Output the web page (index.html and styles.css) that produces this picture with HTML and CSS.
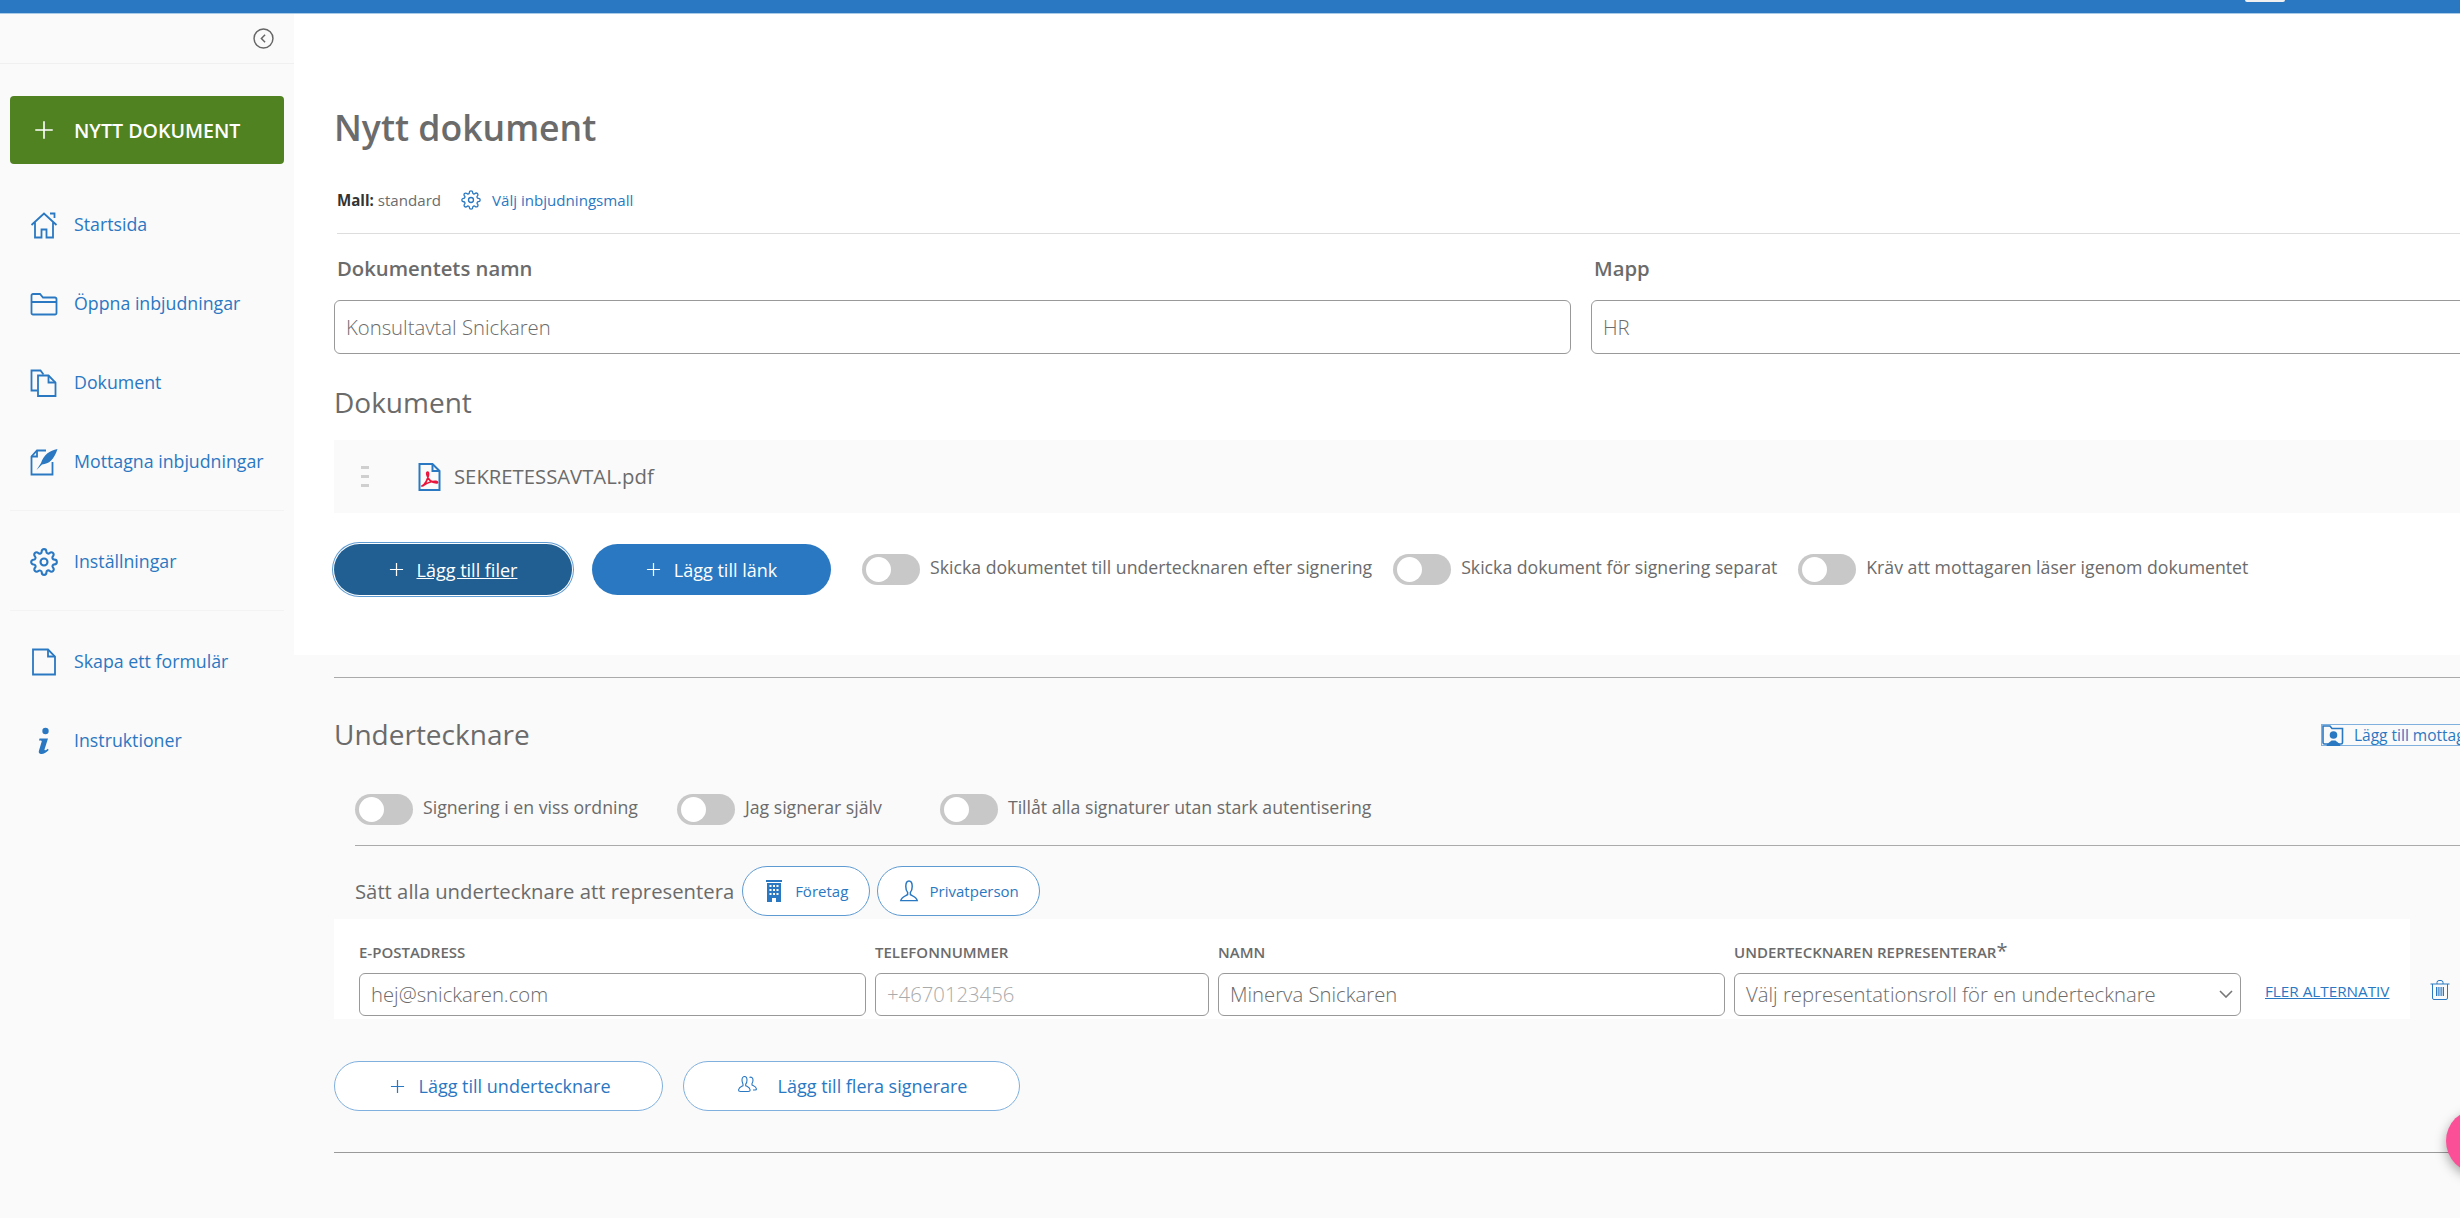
FILE: index.html
```html
<!DOCTYPE html>
<html lang="sv">
<head>
  <meta charset="UTF-8">
  <meta name="viewport" content="width=device-width, initial-scale=1.0">
  <title>Nytt dokument</title>
  <link rel="stylesheet" href="styles.css">
</head>
<body>
  <svg class="sprite" width="0" height="0">
    <symbol id="gear" viewBox="0 0 24 24">
      <circle cx="12" cy="12" r="3"/>
      <path d="M19.4 15a1.65 1.65 0 0 0 .33 1.82l.06.06a2 2 0 0 1 0 2.83 2 2 0 0 1-2.83 0l-.06-.06a1.65 1.65 0 0 0-1.82-.33 1.65 1.65 0 0 0-1 1.51V21a2 2 0 0 1-2 2 2 2 0 0 1-2-2v-.09A1.65 1.65 0 0 0 9 19.4a1.65 1.65 0 0 0-1.82.33l-.06.06a2 2 0 0 1-2.83 0 2 2 0 0 1 0-2.83l.06-.06a1.65 1.65 0 0 0 .33-1.82 1.65 1.65 0 0 0-1.51-1H3a2 2 0 0 1-2-2 2 2 0 0 1 2-2h.09A1.65 1.65 0 0 0 4.6 9a1.65 1.65 0 0 0-.33-1.82l-.06-.06a2 2 0 0 1 0-2.83 2 2 0 0 1 2.83 0l.06.06a1.65 1.65 0 0 0 1.82.33H9a1.65 1.65 0 0 0 1-1.51V3a2 2 0 0 1 2-2 2 2 0 0 1 2 2v.09a1.65 1.65 0 0 0 1 1.51 1.65 1.65 0 0 0 1.82-.33l.06-.06a2 2 0 0 1 2.83 0 2 2 0 0 1 0 2.83l-.06.06a1.65 1.65 0 0 0-.33 1.82V9a1.65 1.65 0 0 0 1.51 1H21a2 2 0 0 1 2 2 2 2 0 0 1-2 2h-.09a1.65 1.65 0 0 0-1.51 1z"/>
    </symbol>
    <symbol id="plus" viewBox="0 0 16 16">
      <path d="M8 1v14M1 8h14"/>
    </symbol>
  </svg>

  <div class="topbar"><span class="topbar-pill"></span></div>

  <div class="app">
    <aside class="sidebar">
      <div class="sidebar-top">
        <svg class="collapse" viewBox="0 0 20 20"><circle cx="10" cy="10" r="9"/><path d="M11.5 6.5 8 10l3.5 3.5"/></svg>
      </div>
      <a class="new-doc"><svg class="icon-plus"><use href="#plus"/></svg>NYTT DOKUMENT</a>

      <nav class="nav nav-first">
        <a class="nav-item">
          <svg class="nav-icon" viewBox="0 0 28 28"><path d="M1.5 14 14 2.5 26.500 14M5 11.500V26.500h6.500v-8h5v8H23V11.500M20 2.500h4.500V7"/></svg>
          Startsida
        </a>
        <a class="nav-item">
          <svg class="nav-icon" viewBox="0 0 28 28"><path d="M1.500 12V5.500a1.500 1.500 0 0 1 1.500-1.500h7l3 3.500h12a1.500 1.500 0 0 1 1.500 1.500v3M1.500 12h25v11a1.500 1.500 0 0 1-1.500 1.500H3A1.500 1.500 0 0 1 1.500 23z"/></svg>
          Öppna inbjudningar
        </a>
        <a class="nav-item">
          <svg class="nav-icon" viewBox="0 0 28 28"><path d="M7.500 21.500H1.500V1.500h9l3 4"/><path d="M8 6.500h10.500l7 7v13.500H8z"/><path d="M18.500 6.500v7h7"/></svg>
          Dokument
        </a>
        <a class="nav-item">
          <svg class="nav-icon" viewBox="0 0 28 28"><path d="M16 2.500H7L1.500 8.500v18h21V14"/><path d="M7 2.500v6H1.500"/><path class="solid" d="M27.500 1c-8 1.500-14 6-16.500 14l-4.500 7 5.500-5.500c7-.5 12-5 15.500-15.500z"/></svg>
          Mottagna inbjudningar
        </a>
      </nav>

      <nav class="nav nav-mid">
        <a class="nav-item">
          <svg class="nav-icon"><use href="#gear"/></svg>
          Inställningar
        </a>
      </nav>

      <nav class="nav nav-last">
        <a class="nav-item">
          <svg class="nav-icon" viewBox="0 0 28 28"><path d="M3 1.500h15l7 7v18H3z"/><path d="M18 1.500v7h7"/></svg>
          Skapa ett formulär
        </a>
        <a class="nav-item">
          <svg class="nav-icon" viewBox="0 0 28 28"><circle class="solid" cx="15.500" cy="4" r="3.200"/><path class="solid" d="M9.500 11.500h8.500l-3.500 11c-.3 1 .8 1.300 3.300-.8l.9 1.300c-3 3.300-5.800 4.500-8 4-1.800-.4-2.300-1.800-1.700-3.600l2.700-8.900c.2-.8-.6-1-2.700-.9z"/></svg>
          Instruktioner
        </a>
      </nav>
    </aside>

    <main class="main">
      <section class="panel">
        <h1 class="title">Nytt dokument</h1>
        <div class="template">
          <span><b>Mall:</b> standard</span>
          <a class="template-link"><svg class="gear-small"><use href="#gear"/></svg>Välj inbjudningsmall</a>
        </div>
        <div class="rule-light"></div>

        <div class="fields">
          <div>
            <label class="field-label">Dokumentets namn</label>
            <input class="input input-large" value="Konsultavtal Snickaren">
          </div>
          <div>
            <label class="field-label">Mapp</label>
            <input class="input input-large" value="HR">
          </div>
        </div>

        <h2 class="heading heading-doc">Dokument</h2>
        <div class="file-row">
          <span class="drag"><i></i><i></i><i></i></span>
          <svg class="pdf" viewBox="0 0 22 28">
            <path class="pdf-page" d="M1 1h13l7 7v19H1z"/>
            <path class="pdf-page" d="M14 1v7h7"/>
            <path class="pdf-mark" d="M3.500 23c3-1.500 5.500-6 6.500-11 .3-2-.2-3-1-3s-1 1.500-.5 3c1 4 4 7.500 9.500 8 1.300 0 1.500-1.500-.5-1.700-4-.3-8 1.200-12 3.700-1.700 1.200-2.500 1-2 1z"/>
          </svg>
          <span class="file-name">SEKRETESSAVTAL.pdf</span>
        </div>

        <div class="actions">
          <a class="btn btn-focus"><svg class="icon-plus"><use href="#plus"/></svg><span>Lägg till filer</span></a>
          <a class="btn btn-solid"><svg class="icon-plus"><use href="#plus"/></svg><span>Lägg till länk</span></a>
          <label class="switch switch-a"><span class="toggle"></span><span class="switch-text">Skicka dokumentet till undertecknaren efter signering</span></label>
          <label class="switch switch-b"><span class="toggle"></span><span class="switch-text">Skicka dokument för signering separat</span></label>
          <label class="switch switch-b"><span class="toggle"></span><span class="switch-text">Kräv att mottagaren läser igenom dokumentet</span></label>
        </div>
      </section>

      <section class="signers">
        <div class="rule"></div>
        <div class="signers-head">
          <h2 class="heading">Undertecknare</h2>
          <a class="add-recipient">
            <svg viewBox="0 0 22 22"><path class="line" d="M6 20H2.500A1.500 1.500 0 0 1 1 18.500V2h7l2 2.500h10.500v14A1.500 1.500 0 0 1 19 20h-3"/><circle class="solid" cx="11.500" cy="11" r="3.800"/><path class="solid" d="M4.500 22c.5-3 4-4 5-5.500h4c1 1.500 4.500 2.500 5 5.500z"/></svg>
            <span>Lägg till mottagare</span>
          </a>
        </div>

        <div class="signer-switches">
          <label class="switch"><span class="toggle"></span><span class="switch-text">Signering i en viss ordning</span></label>
          <label class="switch"><span class="toggle"></span><span class="switch-text">Jag signerar själv</span></label>
          <label class="switch"><span class="toggle"></span><span class="switch-text">Tillåt alla signaturer utan stark autentisering</span></label>
        </div>
        <div class="rule rule-inset"></div>

        <div class="represent">
          <span class="represent-text">Sätt alla undertecknare att representera</span>
          <a class="pill pill-company">
            <svg class="pill-icon" viewBox="0 0 18 22"><path class="solid" d="M1 0h16v2H1zM2 3h14v19h-5v-4H7v4H2zM4.500 5v2h2V5zM8 5v2h2V5zM11.500 5v2h2V5zM4.500 9v2h2V9zM8 9v2h2V9zM11.500 9v2h2V9zM4.500 13v2h2v-2zM8 13v2h2v-2zM11.500 13v2h2v-2z" fill-rule="evenodd"/></svg>
            Företag
          </a>
          <a class="pill pill-person">
            <svg class="pill-icon" viewBox="0 0 20 24"><path class="line" d="M6.500 7c0-3.500 1.500-6 3.500-6s3.500 2.500 3.500 6c0 3-1.200 5.500-2 6.500v2.500c2.500 1.500 6.500 2 7.500 6.500H1c1-4.500 5-5 7.500-6.500v-2.500c-.8-1-2-3.500-2-6.500z"/></svg>
            Privatperson
          </a>
        </div>

        <div class="signer-line">
          <div class="signer-row">
            <div class="signer-col">
              <label class="col-label">E-POSTADRESS</label>
              <input class="input" value="hej@snickaren.com">
            </div>
            <div class="signer-col">
              <label class="col-label">TELEFONNUMMER</label>
              <input class="input" placeholder="+4670123456">
            </div>
            <div class="signer-col">
              <label class="col-label">NAMN</label>
              <input class="input" value="Minerva Snickaren">
            </div>
            <div class="signer-col">
              <label class="col-label">UNDERTECKNAREN REPRESENTERAR<span class="star">*</span></label>
              <div class="input select">
                <span>Välj representationsroll för en undertecknare</span>
                <svg class="chevron" viewBox="0 0 14 8"><path d="M1 1l6 6 6-6"/></svg>
              </div>
            </div>
            <a class="more">FLER ALTERNATIV</a>
          </div>
          <svg class="trash" viewBox="0 0 20 20"><path d="M0.500 4h19M7 4V2.500a2 2 0 0 1 2-2h2a2 2 0 0 1 2 2V4M2.500 4v14a1.500 1.500 0 0 0 1.500 1.500h12a1.500 1.500 0 0 0 1.500-1.500V4M6.500 7v9M10 7v9M13.500 7v9M8.200 7v9M11.800 7v9"/></svg>
        </div>

        <div class="add-row">
          <a class="btn btn-line btn-signer"><svg class="icon-plus"><use href="#plus"/></svg><span>Lägg till undertecknare</span></a>
          <a class="btn btn-line btn-many">
            <svg class="group" viewBox="0 0 22 20"><path d="M6 4c0-2 1-3.500 2.500-3.500S11 2 11 4s-.7 3.500-1.300 4.200v1.500c1.500 1 4 1.300 4.500 4.300 0 1-1 1.500-2 1.500H4.500c-1 0-2-.5-2-1.500.5-3 3-3.300 4.500-4.300V8.200C6.700 7.500 6 6 6 4z"/><path d="M13.500 1.500c1.500-1 3.500 0 3.500 2.500 0 1.500-.5 2.800-1 3.500v1.500c1.500.8 4 1 4.500 4 0 .8-.5 1-1.500 1h-2"/></svg>
            <span>Lägg till flera signerare</span>
          </a>
        </div>
        <div class="rule rule-bottom"></div>
      </section>
    </main>
  </div>

  <span class="chat-bubble"></span>
</body>
</html>
```

FILE: styles.css
```css
html, body {
  margin: 0;
  padding: 0;
  height: 100%;
  overflow: hidden;
  font-family: "Open Sans", "Noto Sans", sans-serif;
  background-color: #fafafa;
  color: #6b6b6b;
}
a { color: #2a78c2; }
.sprite { position: absolute; }
.solid { fill: currentColor; stroke: none; }

/* Toppen */
.topbar {
  position: relative;
  height: 13px;
  background: #2a78c2;
  box-shadow: 0 1px 0 #a9cbe8;
  display: flex;
  justify-content: flex-end;
  padding-right: 175px;
}
.topbar-pill {
  width: 40px;
  height: 2px;
  background: #f0f0f0;
  border-radius: 0 0 3px 3px;
}
.app {
  display: flex;
  height: 1205px;
}

/* Sidomeny */
.sidebar {
  width: 294px;
  flex: none;
  background: #fafafa;
}
.sidebar-top {
  height: 50px;
  border-bottom: 1px solid #f0f0f0;
  display: flex;
  align-items: center;
  justify-content: flex-end;
  padding-right: 20px;
}
.collapse {
  width: 21px;
  height: 21px;
  fill: none;
  stroke: #666;
  stroke-width: 1.4;
}
.new-doc {
  display: flex;
  align-items: center;
  height: 68px;
  margin: 32px 10px 0;
  width: 274px;
  background: #508222;
  border-radius: 4px;
  color: white;
  font-size: 19.600px;
  font-weight: 600;
  box-sizing: border-box;
  padding-left: 24px;
}
.icon-plus {
  width: 20px;
  height: 20px;
  fill: none;
  stroke: currentColor;
  stroke-width: 1.300;
  margin-right: 20px;
  flex: none;
}
.nav {
  margin: 0 10px 0 10px;
  width: 274px;
}
.nav-first {
  margin-top: 21px;
  padding-bottom: 9px;
  border-bottom: 1px solid #f3f3f3;
}
.nav-mid {
  margin-top: 11px;
  padding-bottom: 9px;
  border-bottom: 1px solid #f3f3f3;
}
.nav-last { margin-top: 11px; }
.nav-item {
  display: flex;
  align-items: center;
  box-sizing: border-box;
  height: 79px;
  font-size: 17.750px;
  padding: 0 0 2px 20px;
}
.nav-icon {
  width: 28px;
  height: 28px;
  margin: 2px 16px 0 0;
  flex: none;
  fill: none;
  stroke: currentColor;
  stroke-width: 1.800;
  color: #2a78c2;
}

/* Innehåll */
.main {
  flex: 1;
  min-width: 0;
  overflow: hidden;
}
.panel {
  background: white;
  height: 642px;
  padding: 89px 0 0 40px;
  box-sizing: border-box;
}
.title {
  margin: 0;
  font-size: 35.600px;
  font-weight: 600;
  line-height: 50px;
}
.template {
  display: flex;
  align-items: center;
  height: 24px;
  margin: 36px 0 0 3px;
  font-size: 15.100px;
}
.template b {
  font-weight: 700;
  color: #333;
}
.template-link {
  display: flex;
  align-items: center;
  margin-left: 20px;
}
.gear-small {
  width: 20px;
  height: 20px;
  margin-right: 11px;
  fill: none;
  stroke: #2a78c2;
  stroke-width: 1.600;
}
.rule-light {
  height: 1px;
  margin: 21px 0 0 3px;
  background: #ddd;
}
.fields {
  display: grid;
  grid-template-columns: 1237px 1237px;
  column-gap: 20px;
  margin-top: 23px;
}
.field-label {
  display: block;
  padding: 0 0 2px 3px;
  font-size: 20.300px;
  font-weight: 600;
  line-height: 22px;
  margin-bottom: 19px;
}
.input {
  display: block;
  box-sizing: border-box;
  width: 100%;
  height: 43px;
  border: 1px solid #999;
  border-radius: 6px;
  padding: 0 11px;
  background: white;
  font-family: inherit;
  font-size: 20.300px;
  font-weight: 300;
  color: #6b6b6b;
  outline: none;
}
.input::placeholder { color: #aaa; opacity: 1; }
.input-large { height: 54px; }
.heading {
  margin: 0;
  font-size: 28px;
  font-weight: 400;
  line-height: 34px;
  padding-bottom: 2px;
}
.heading-doc { margin-top: 31px; }
.file-row {
  display: flex;
  align-items: center;
  height: 73px;
  margin-top: 19px;
  background: #fafafa;
}
.drag {
  display: flex;
  flex-direction: column;
  gap: 6px;
  margin-left: 27px;
  width: 57px;
}
.drag i {
  display: block;
  width: 8px;
  height: 3px;
  background: #cfcfcf;
}
.pdf {
  width: 23px;
  height: 28px;
  margin-right: 13px;
}
.pdf-page {
  fill: none;
  stroke: #2a78c2;
  stroke-width: 2;
}
.pdf-mark {
  fill: none;
  stroke: #e8153c;
  stroke-width: 1.700;
}
.file-name { font-size: 20.300px; padding-bottom: 2px; }

/* Knappar och reglage */
.actions {
  display: flex;
  align-items: center;
  height: 51px;
  margin-top: 31px;
}
.btn {
  display: flex;
  align-items: center;
  justify-content: center;
  box-sizing: border-box;
  height: 51px;
  border-radius: 26px;
  font-size: 18px;
  color: white;
}
.btn .icon-plus {
  width: 15px;
  height: 15px;
  margin-right: 13px;
}
.btn-focus {
  width: 238px;
  background: #215f92;
  box-shadow: 0 0 0 1px white, 0 0 0 2px #5f9bd3;
}
.btn-focus span { text-decoration: underline; }
.btn-solid {
  width: 239px;
  margin-left: 20px;
  background: #2a78c2;
}
.switch {
  display: flex;
  align-items: center;
  font-size: 17.700px;
  white-space: nowrap;
}
.switch-text { padding-bottom: 6px; }
.switch-a { margin-left: 31px; }
.switch-b { margin-left: 21px; }
.toggle {
  width: 58px;
  height: 31px;
  border-radius: 16px;
  background: #c8c8c8;
  margin-right: 10px;
  flex: none;
  display: flex;
  align-items: center;
  padding-left: 4px;
  box-sizing: border-box;
}
.toggle::after {
  content: "";
  width: 25px;
  height: 25px;
  border-radius: 50%;
  background: white;
}

/* Undertecknare */
.signers { padding-left: 40px; }
.rule {
  height: 1px;
  background: #aaa;
}
.signers > .rule:first-child { margin-top: 22px; }
.signers-head {
  display: flex;
  align-items: center;
  justify-content: space-between;
  margin-top: 39px;
  position: relative;
  white-space: nowrap;
}
.add-recipient {
  position: absolute;
  left: 1987px;
  top: 7px;
  display: flex;
  align-items: center;
  height: 20px;
  border: 1px solid #7fb0de;
  font-size: 15.500px;
}
.add-recipient svg {
  width: 22px;
  height: 22px;
  margin-right: 10px;
  color: #2a78c2;
}
.line {
  fill: none;
  stroke: #2a78c2;
  stroke-width: 1.600;
}
.signer-switches {
  display: flex;
  align-items: center;
  margin: 41px 0 0 21px;
  gap: 39px;
}
.signer-switches .switch:nth-child(3) { margin-left: 19px; }
.rule-inset { margin: 20px 0 0 21px; }
.represent {
  display: flex;
  align-items: center;
  height: 50px;
  margin: 20px 0 0 21px;
}
.represent-text { font-size: 20.300px; margin-right: 8px; }
.pill {
  display: flex;
  align-items: center;
  justify-content: center;
  box-sizing: border-box;
  height: 50px;
  border: 1px solid #5f9bd3;
  border-radius: 25px;
  background: white;
  font-size: 15px;
}
.pill-icon {
  height: 22px;
  width: 20px;
  margin-right: 11px;
}
.pill-company { width: 128px; }
.pill-person { width: 163px; margin-left: 7px; }
.signer-line {
  display: flex;
  align-items: center;
  margin-top: 3px;
}
.signer-row {
  display: grid;
  grid-template-columns: 507px 334px 507px 507px auto;
  column-gap: 9px;
  align-items: end;
  width: 2076px;
  height: 100px;
  box-sizing: border-box;
  padding: 23px 0 3px 25px;
  background: white;
}
.signer-row .input { padding-bottom: 2px; }
.col-label {
  display: block;
  font-size: 15px;
  font-weight: 600;
  line-height: 20px;
  margin-bottom: 11px;
  white-space: nowrap;
}
.star { font-size: 20px; line-height: 14px; font-weight: 400; }
.select {
  display: flex;
  align-items: center;
  justify-content: space-between;
  padding-right: 7px;
  white-space: nowrap;
}
.chevron {
  width: 14px;
  height: 8px;
  fill: none;
  stroke: #777;
  stroke-width: 1.600;
}
.more {
  font-size: 15.250px;
  text-decoration: underline;
  margin: 0 0 15px 15px;
  white-space: nowrap;
}
.trash {
  width: 20px;
  height: 20px;
  margin: 42px 0 0 20px;
  flex: none;
  fill: none;
  stroke: #2a78c2;
  stroke-width: 1;
}
.add-row {
  display: flex;
  margin-top: 42px;
  gap: 20px;
}
.btn-line {
  height: 50px;
  border: 1px solid #7fb0de;
  background: white;
  color: #2a78c2;
}
.btn-signer { width: 329px; padding-left: 4px; }
.btn-many { width: 337px; }
.group {
  width: 22px;
  height: 20px;
  margin-right: 20px;
  fill: none;
  stroke: #2a78c2;
  stroke-width: 1.100;
}
.rule-bottom {
  margin-top: 41px;
  background: #999;
}
.chat-bubble {
  position: absolute;
  left: 2446px;
  top: 1109px;
  width: 64px;
  height: 64px;
  border-radius: 50%;
  background: #fb5098;
  box-shadow: 0 4px 12px rgba(0, 0, 0, 0.35);
}
```
